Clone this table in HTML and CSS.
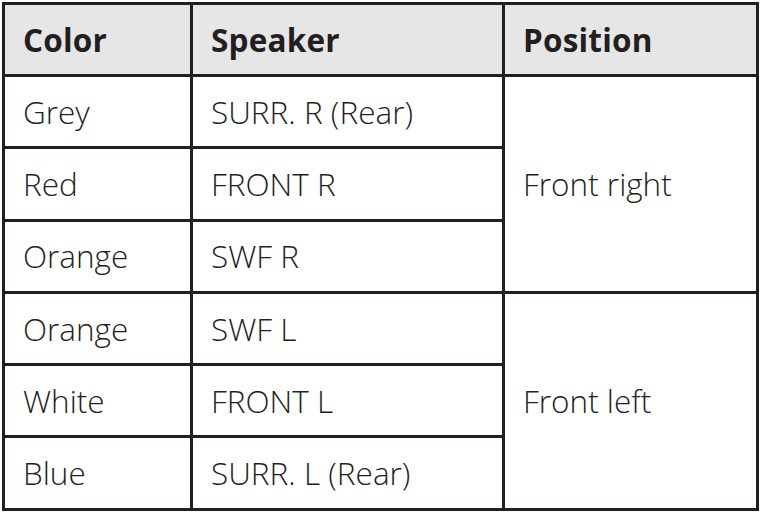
FILE: index.html
```html
<!DOCTYPE html>
<html>
<head>
<meta charset="utf-8">
<link rel="stylesheet" href="styles.css">
</head>
<body>
<table class="spk">
  <colgroup>
    <col class="c1"><col class="c2"><col class="c3">
  </colgroup>
  <thead>
    <tr><th>Color</th><th>Speaker</th><th>Position</th></tr>
  </thead>
  <tbody>
    <tr><td>Grey</td><td>SURR. R (Rear)</td><td rowspan="3">Front right</td></tr>
    <tr><td>Red</td><td>FRONT R</td></tr>
    <tr><td>Orange</td><td>SWF R</td></tr>
    <tr><td>Orange</td><td>SWF L</td><td rowspan="3">Front left</td></tr>
    <tr><td>White</td><td>FRONT L</td></tr>
    <tr><td>Blue</td><td>SURR. L (Rear)</td></tr>
  </tbody>
</table>
</body>
</html>
```
FILE: styles.css
```css
html, body {
  margin: 0;
  padding: 0;
  background: #ffffff;
}
body {
  padding: 2px 0 0 2px;
  font-family: "Open Sans", "Liberation Sans", sans-serif;
  color: #231f20;
}
.spk {
  border-collapse: collapse;
  table-layout: fixed;
  width: 754px;
}
.c1 { width: 188px; }
.c2 { width: 312px; }
.c3 { width: 254px; }
.spk th, .spk td {
  border: 3px solid #231f20;
  padding: 0 0 0 18px;
  text-align: left;
  vertical-align: middle;
  white-space: nowrap;
  line-height: 1.2;
}
.spk th {
  background: #e6e6e6;
  font-weight: 700;
  font-size: 31.5px;
  letter-spacing: 0.2px;
  height: 69px;
}
.spk td {
  font-weight: 300;
  font-size: 31.5px;
  height: 69.3px;
}
```
